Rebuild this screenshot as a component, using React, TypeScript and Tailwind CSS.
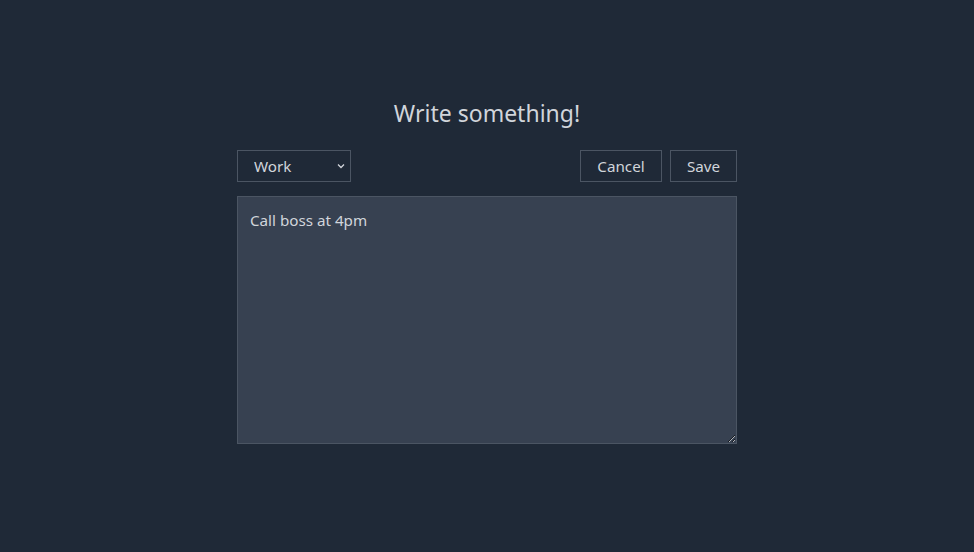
import React, { useState } from "react";

export default function App() {
  const [category, setCategory] = useState("Work");
  const [text, setText] = useState("Call boss at 4pm");

  return (
    <div className="min-h-[552px] w-full bg-[#1f2937] text-[#d1d5db] font-['Noto_Sans',sans-serif]">
      <div className="mx-auto flex w-[500px] flex-col pt-[97px]">
        <h1 className="text-center text-[23px] leading-[32px] text-[#d1d5db]">Write something!</h1>

        <div className="mt-[21px] flex items-center justify-between">
          <div className="relative">
            <select
              value={category}
              onChange={(e) => setCategory(e.target.value)}
              className="h-[32px] w-[114px] appearance-none border border-[#4b5563] bg-[#1f2937] pl-[16px] text-[15.2px] text-[#d1d5db] outline-none"
            >
              <option>Work</option>
              <option>Personal</option>
              <option>Shopping</option>
            </select>
            <svg
              className="pointer-events-none absolute right-[6px] top-[13px]"
              width="8"
              height="6"
              viewBox="0 0 8 6"
              fill="none"
            >
              <path d="M1 1.5L4 4.5L7 1.5" stroke="#d1d5db" strokeWidth="1.3" />
            </svg>
          </div>

          <div className="flex gap-[8px]">
            <button className="h-[32px] w-[82px] border border-[#4b5563] text-[15.2px] text-[#d1d5db]">Cancel</button>
            <button className="h-[32px] w-[67px] border border-[#4b5563] text-[15.2px] text-[#d1d5db]">Save</button>
          </div>
        </div>

        <textarea
          value={text}
          onChange={(e) => setText(e.target.value)}
          className="mt-[14px] h-[248px] w-[500px] border border-[#4b5563] bg-[#374151] px-[12px] pt-[11px] pb-[12px] text-[15.2px] leading-[24px] text-[#d1d5db] outline-none"
        />
      </div>
    </div>
  );
}
